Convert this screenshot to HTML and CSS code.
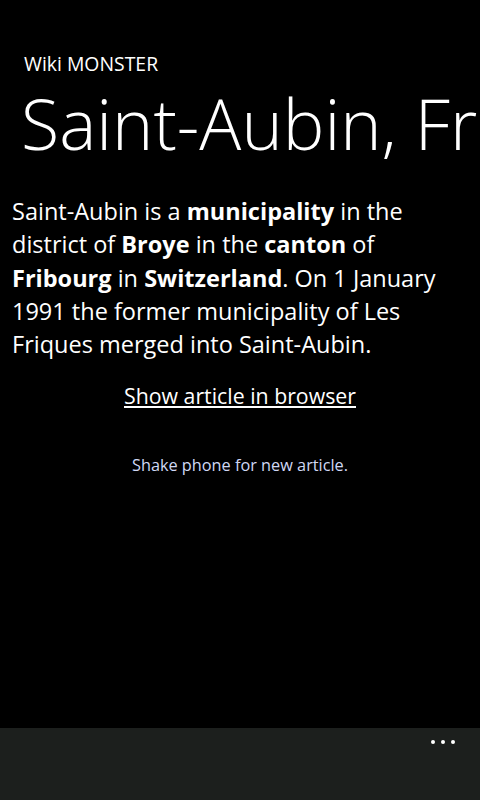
FILE: index.html
```html
<!DOCTYPE html>
<html>
<head>
<meta charset="utf-8">
<link rel="stylesheet" href="styles.css">
</head>
<body>
<div class="screen">
  <main class="content">
    <header class="head">
      <div class="app-name">Wiki MONSTER</div>
      <h1 class="title">Saint-Aubin, Fribourg</h1>
    </header>
    <p class="summary">Saint-Aubin is a <b>municipality</b> in the district of <b>Broye</b> in the <b>canton</b> of <b>Fribourg</b> in <b>Switzerland</b>. On 1 January 1991 the former municipality of Les Friques merged into Saint-Aubin.</p>
    <a class="browser-link" href="#">Show article in browser</a>
    <div class="hint">Shake phone for new article.</div>
  </main>
  <footer class="appbar">
    <div class="dots"><span></span><span></span><span></span></div>
  </footer>
</div>
</body>
</html>
```

FILE: styles.css
```css
html, body {
  margin: 0;
  padding: 0;
  background: #000;
}
.screen {
  width: 480px;
  height: 800px;
  display: flex;
  flex-direction: column;
  background: #000;
  color: #fff;
  font-family: "Open Sans", "Noto Sans", sans-serif;
  overflow: hidden;
}
.content {
  flex: 1;
  display: flex;
  flex-direction: column;
}
.head {
  padding: 50px 0 0 24px;
}
.app-name {
  font-size: 19.4px;
  line-height: 28px;
}
.title {
  margin: 0 0 0 -3px;
  font-size: 70px;
  font-weight: 300;
  line-height: 90px;
  white-space: nowrap;
  overflow: hidden;
}
.summary {
  margin: 27px 0 0 12px;
  font-size: 23.5px;
  line-height: 33.3px;
  padding-right: 10px;
}
.summary b {
  font-weight: 700;
}
.browser-link {
  align-self: center;
  margin-top: 20px;
  color: #fff;
  font-size: 21.3px;
  line-height: 30px;
}
.hint {
  align-self: center;
  margin-top: 44px;
  color: #d0d8f5;
  font-size: 16.3px;
  line-height: 20px;
}
.appbar {
  height: 72px;
  background: #1c1f1d;
  display: flex;
  justify-content: flex-end;
}
.dots {
  display: flex;
  gap: 6px;
  padding: 12px 25px 0 0;
}
.dots span {
  width: 4px;
  height: 4px;
  border-radius: 50%;
  background: #fff;
}
```
